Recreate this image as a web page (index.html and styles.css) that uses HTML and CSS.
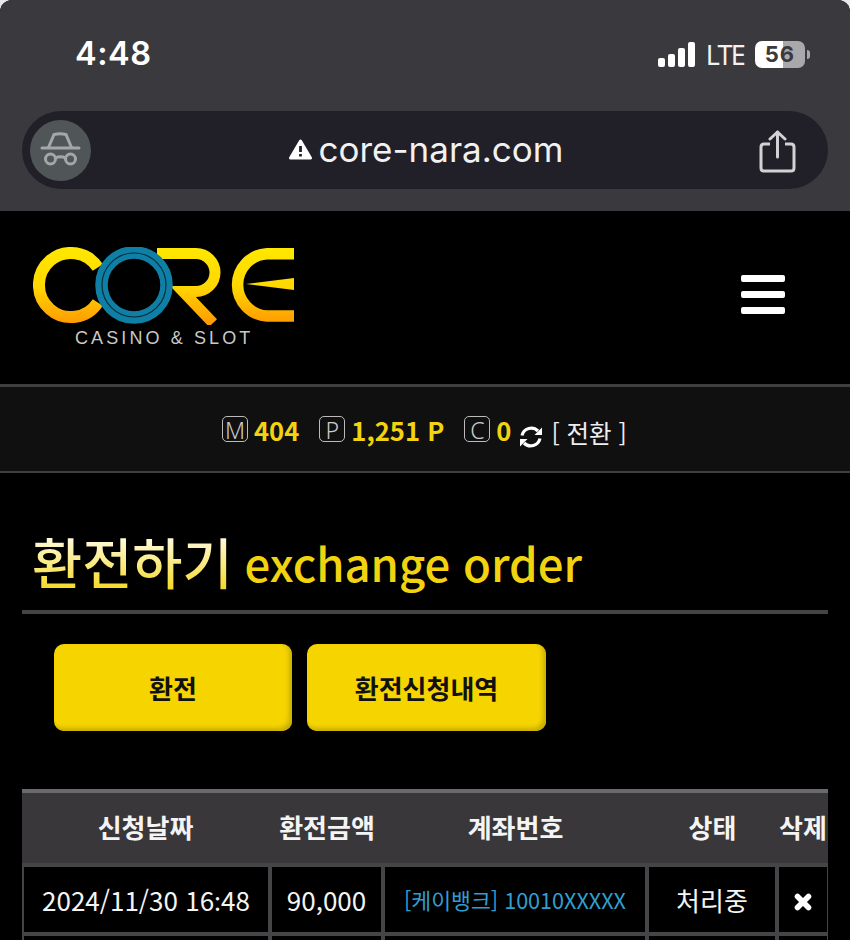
FILE: index.html
```html
<!DOCTYPE html>
<html lang="ko">
<head>
    <meta charset="UTF-8">
    <meta name="viewport" content="width=device-width, initial-scale=1.0">
    <title>환전하기</title>
    <link rel="stylesheet" href="styles.css">
</head>
<body>
<div class="page">

    <div class="browser">
        <div class="status">
            <span class="time">4:48</span>
            <div class="status-right">
                <div class="signal"><i class="b1"></i><i class="b2"></i><i class="b3"></i><i class="b4"></i></div>
                <span class="lte">LTE</span>
                <div class="battery"><span>56</span></div>
                <i class="nub"></i>
            </div>
        </div>
        <div class="addr">
            <div class="addr-left">
                <div class="incognito">
                    <svg width="61" height="61" viewBox="0 0 61 61" fill="none" stroke="#a3a7a9" stroke-width="3">
                        <path d="M12 28H49" stroke-linecap="round"/>
                        <path d="M18.500 27.500L24 14.500Q30 13 36 14.500L41.500 27.500"/>
                        <circle cx="20.500" cy="39" r="5"/>
                        <circle cx="40.500" cy="39" r="5"/>
                        <path d="M25.500 38Q30.500 35.500 35.500 38"/>
                    </svg>
                </div>
            </div>
            <div class="url">
                <svg class="warn" width="23" height="21" viewBox="0 0 23 21">
                    <path d="M11.500 2L21.500 19H1.500Z" fill="#fff" stroke="#fff" stroke-width="3" stroke-linejoin="round"/>
                    <path d="M11.500 7V13" stroke="#211f27" stroke-width="2.800"/>
                    <path d="M11.500 15V17.500" stroke="#211f27" stroke-width="2.800"/>
                </svg>
                <span>core-nara.com</span>
            </div>
            <div class="addr-right">
                <svg width="37" height="44" viewBox="0 0 37 44" fill="none" stroke="#d2d2d4" stroke-width="3">
                    <path d="M11 14H5Q2 14 2 17V38Q2 41 5 41H32Q35 41 35 38V17Q35 14 32 14H26" stroke-linejoin="round"/>
                    <path d="M18.500 2V27" stroke-linecap="round"/>
                    <path d="M11 9L18.500 2L26 9" stroke-linecap="round" stroke-linejoin="round"/>
                </svg>
            </div>
        </div>
    </div>

    <header class="head">
        <div class="logo">
            <svg width="265" height="78" viewBox="0 0 265 78" fill="none">
                <defs>
                    <linearGradient id="gold" gradientUnits="userSpaceOnUse" x1="0" y1="0" x2="0" y2="78">
                        <stop offset="0" stop-color="#ffe800"/>
                        <stop offset="0.5" stop-color="#ffd800"/>
                        <stop offset="1" stop-color="#ff9800"/>
                    </linearGradient>
                </defs>
                <path d="M64.800 20.600A32 32 0 1 0 64.800 55.400" stroke="url(#gold)" stroke-width="12"/>
                <path d="M124 6.500H163A19 19 0 0 1 163 44.500H150L180 76" stroke="url(#gold)" stroke-width="11"/>
                <path d="M261 6.700H234A31.200 31.200 0 0 0 234 69H261" stroke="url(#gold)" stroke-width="11.500"/>
                <path d="M213 37L261 31V43Z" fill="url(#gold)"/>
                <circle cx="101" cy="38" r="32.500" stroke="#0f7fa6" stroke-width="12.500"/>
                <circle cx="101" cy="38" r="32" stroke="#04303f" stroke-width="1.200"/>
            </svg>
            <span class="logo-sub">CASINO &amp; SLOT</span>
        </div>
        <div class="burger"><i></i><i></i><i></i></div>
    </header>

    <div class="info">
        <span class="mark">M</span><b class="amount a-m">404</b>
        <span class="mark">P</span><b class="amount a-p">1,251 P</b>
        <span class="mark">C</span><b class="amount a-c">0</b>
        <svg class="refresh" width="24" height="24" viewBox="0 0 24 24" fill="none" stroke="#fff" stroke-width="3.200">
            <path d="M3 10.500A9.500 9.500 0 0 1 19 6"/>
            <path d="M21 13.500A9.500 9.500 0 0 1 5 18"/>
            <path d="M23 2.500V10H15.500Z" fill="#fff" stroke="none"/>
            <path d="M1 21.500V14H8.500Z" fill="#fff" stroke="none"/>
        </svg>
        <span class="switch">[ 전환 ]</span>
    </div>

    <h1 class="title"><span class="title-ko">환전하기</span> <span class="title-en">exchange order</span></h1>

    <div class="tabs">
        <a class="btn btn-a">환전</a>
        <a class="btn btn-b">환전신청내역</a>
    </div>

    <table class="list">
        <colgroup>
            <col class="c1"><col class="c2"><col class="c3"><col class="c4"><col class="c5">
        </colgroup>
        <thead>
            <tr><th>신청날짜</th><th>환전금액</th><th>계좌번호</th><th>상태</th><th>삭제</th></tr>
        </thead>
        <tbody>
            <tr>
                <td>2024/11/30 16<span class="colon">:</span>48</td>
                <td>90,000</td>
                <td class="acct">[케이뱅크] 10010XXXXX</td>
                <td>처리중</td>
                <td>
                    <svg class="del" width="18" height="18" viewBox="0 0 18 18" stroke="#fff" stroke-width="5.600" stroke-linecap="round">
                        <path d="M3.500 3.500L14.500 14.500M14.500 3.500L3.500 14.500"/>
                    </svg>
                </td>
            </tr>
            <tr class="next"><td></td><td></td><td></td><td></td><td></td></tr>
        </tbody>
    </table>

</div>
</body>
</html>
```

FILE: styles.css
```css
html, body {
    margin: 0;
    padding: 0;
    background: #e8e8e8;
}
body {
    font-family: "Noto Sans CJK KR", "Noto Sans", sans-serif;
    color: #fff;
}
.page {
    width: 850px;
    height: 940px;
    overflow: hidden;
    background: #000;
    border-radius: 12px 12px 0 0;
}

/* browser chrome */
.browser {
    height: 211px;
    background: #3a393e;
    font-family: Inter, sans-serif;
}
.status {
    height: 111px;
    box-sizing: border-box;
    padding: 33px 40px 0 75px;
    display: flex;
    justify-content: space-between;
}
.time {
    font-size: 32.5px;
    font-weight: 600;
    line-height: 42px;
    letter-spacing: 0.5px;
}
.status-right {
    display: flex;
    align-items: center;
    height: 42px;
}
.signal {
    display: flex;
    align-items: flex-end;
    gap: 3px;
    height: 25px;
}
.signal i {
    width: 7px;
    background: #fff;
    border-radius: 2px;
}
.b1 { height: 9px; }
.b2 { height: 13px; }
.b3 { height: 19px; }
.b4 { height: 25px; }
.lte {
    margin-left: 11px;
    font-family: "Noto Sans", sans-serif;
    font-size: 27px;
    letter-spacing: -1.8px;
    color: #f2f2f2;
}
.battery {
    margin-left: 11px;
    width: 50px;
    height: 27px;
    border-radius: 7px;
    background: linear-gradient(90deg, #fff 56%, #a9a8ab 56%);
    display: flex;
    align-items: center;
    justify-content: center;
}
.battery span {
    font-size: 22px;
    font-weight: 700;
    color: #3a393e;
    letter-spacing: 1px;
}
.nub {
    width: 3px;
    height: 9px;
    margin-left: 2px;
    background: #a9a8ab;
    border-radius: 0 3px 3px 0;
}
.addr {
    height: 78px;
    margin: 0 22px;
    background: #211f27;
    border-radius: 39px;
    display: grid;
    grid-template-columns: 1fr auto 1fr;
    align-items: center;
}
.addr-left {
    padding-left: 8px;
}
.incognito {
    width: 61px;
    height: 61px;
    border-radius: 50%;
    background: #505558;
}
.incognito svg, .addr-right svg {
    display: block;
}
.url {
    display: flex;
    align-items: center;
    gap: 7px;
    padding: 0 0 2px 2px;
    font-size: 35px;
    color: #f1f1f2;
}
.addr-right {
    display: flex;
    justify-content: flex-end;
    padding: 3px 32px 0 0;
}

/* site header */
.head {
    height: 137px;
    padding: 36px 65px 0 33px;
    display: flex;
    justify-content: space-between;
    border-bottom: 3px solid #3f3e41;
}
.logo svg {
    display: block;
}
.logo-sub {
    display: block;
    margin: 3px 0 0 42px;
    font-family: "Liberation Sans", sans-serif;
    font-size: 18px;
    line-height: 20px;
    letter-spacing: 3.1px;
    color: #c9c9c9;
    white-space: nowrap;
}
.burger {
    width: 44px;
    margin-top: 28px;
    display: flex;
    flex-direction: column;
    gap: 9px;
}
.burger i {
    height: 7px;
    background: #fff;
    border-radius: 2px;
}

/* money row */
.info {
    height: 84px;
    background: #111011;
    border-bottom: 2px solid #3f3e41;
    padding-left: 222px;
    display: flex;
    align-items: center;
}
.mark {
    width: 24px;
    height: 24px;
    border: 1px solid #bbb;
    border-radius: 5px;
    text-align: center;
    font-family: "Noto Sans", sans-serif;
    font-weight: 300;
    font-size: 23px;
    line-height: 26px;
    color: #ccc;
}
.amount {
    margin: 1px 0 0 6px;
    font-size: 25.6px;
    font-weight: 700;
    color: #f2d30f;
}
.a-m { margin-right: 20px; }
.a-p { margin-right: 20px; }
.a-c { margin-right: 8px; }
.refresh {
    margin-top: 16px;
}
.switch {
    margin-left: 8px;
    margin-top: 7px;
    font-size: 24.5px;
    color: #eee;
    white-space: nowrap;
}

.title {
    margin: 0 22px;
    height: 141px;
    box-sizing: border-box;
    padding: 50px 0 0 10px;
    border-bottom: 4px solid #444346;
    font-weight: 500;
    line-height: 76px;
    white-space: nowrap;
}
.title-ko {
    font-size: 54.5px;
    background: linear-gradient(180deg, #fffbe0 20%, #f6da2a 85%);
    -webkit-background-clip: text;
    background-clip: text;
    color: transparent;
}
.title-en {
    margin-left: 3px;
    font-size: 45.5px;
    color: #f2d30f;
    vertical-align: 2px;
}

.tabs {
    display: flex;
    gap: 15px;
    padding: 30px 0 0 54px;
    height: 87px;
}
.btn {
    height: 87px;
    border-radius: 10px;
    background: #f5d400;
    box-shadow: inset -3px -3px 4px #c9ae00;
    display: flex;
    align-items: center;
    justify-content: center;
    font-size: 26px;
    font-weight: 700;
    color: #111;
}
.btn-a { width: 238px; }
.btn-b { width: 239px; }

.list {
    width: 806px;
    margin: 58px 0 0 22px;
    table-layout: fixed;
    border-collapse: separate;
    border-spacing: 0;
}
.c1 { width: 250px; }
.c2 { width: 113px; }
.c3 { width: 264px; }
.c4 { width: 130px; }
.c5 { width: 49px; }
.list th {
    height: 67px;
    padding: 0 3px 3px 0;
    background: #39373a;
    border-top: 4px solid #6a696b;
    font-size: 26px;
    font-weight: 700;
    color: #f4f4f4;
    white-space: nowrap;
}
.list th:last-child {
    padding: 0 0 3px;
    text-align: left;
}
.list td {
    height: 65px;
    padding: 0;
    border-top: 4px solid #454447;
    border-right: 4px solid #454447;
    text-align: center;
    font-size: 26px;
    color: #f4f4f4;
    white-space: nowrap;
}
.list td:first-child {
    border-left: 2px solid #454447;
}
.list td:last-child {
    border-right: 1px solid #454447;
}
.list td.acct {
    font-size: 21.6px;
    color: #2f9fd0;
}
.colon {
    font-family: "Noto Sans", sans-serif;
}
.del {
    display: block;
    margin: 4px auto 0;
}
```
